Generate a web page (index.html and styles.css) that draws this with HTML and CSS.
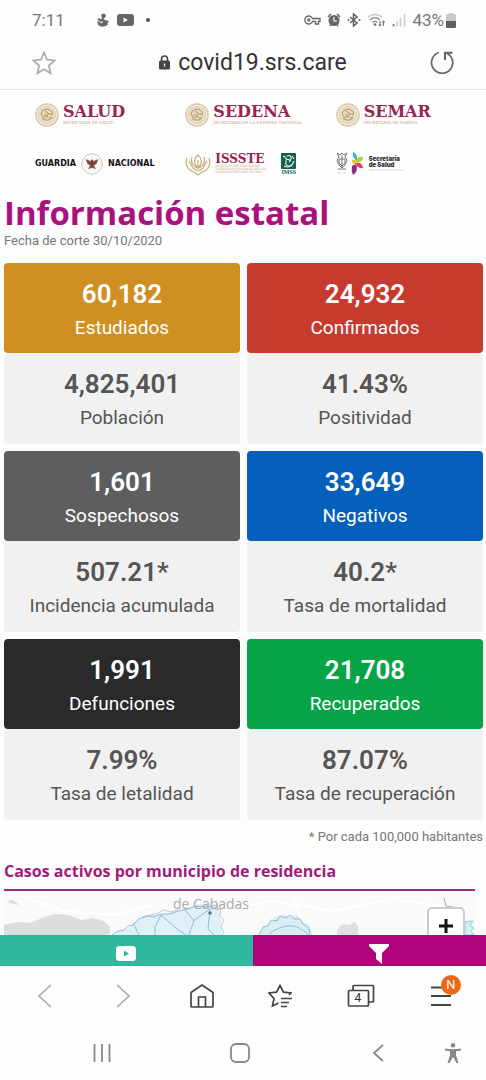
FILE: index.html
```html
<!DOCTYPE html>
<html lang="es">
<head>
  <meta charset="utf-8">
  <meta name="viewport" content="width=device-width, initial-scale=1">
  <title>Información estatal</title>
  <link rel="stylesheet" href="styles.css">
</head>
<body>
  <!-- Plantilla del escudo que comparten las secretarías -->
  <svg width="0" height="0" class="defs" aria-hidden="true">
    <symbol id="escudo" viewBox="0 0 24 24">
      <circle cx="12" cy="12" r="11" fill="#f6efe2" stroke="#cdb893" stroke-width="1.6" stroke-dasharray="1.4 .5"/>
      <circle cx="12" cy="12" r="8.6" fill="#eadfc9" stroke="#d8c6a4" stroke-width=".8"/>
      <path d="M6 11c1-4 5-6 9-4 2 1 3 3 2 5-2-2-4-1-5 1s-4 2-6-2zM7 15c3 3 8 3 10-1M10 8l4 3M9 11l4 3M14 14l2 2" fill="none" stroke="#bda275" stroke-width="1.2"/>
    </symbol>
  </svg>

  <header class="status-bar">
    <span class="clock">7:11</span>
    <svg class="notif" width="12" height="14" viewBox="0 0 12 14">
      <circle cx="6.500" cy="2.800" r="2.300" fill="#666"/>
      <path d="M6.500 4L5 7l3 1-2 2M1 6l4 2M1 8.500c1 2 3 3 5 2.500s4-1 5-3M1.500 11c3 2.500 7 2 9-.5" fill="none" stroke="#666" stroke-width="2"/>
    </svg>
    <svg class="video" width="17" height="12" viewBox="0 0 17 12">
      <rect width="17" height="12" rx="3" fill="#666"/>
      <path d="M6.500 3.500v5l4.500-2.500z" fill="#fff"/>
    </svg>
    <span class="dot"></span>
    <div class="indicators">
      <svg width="17" height="12" viewBox="0 0 17 12" fill="none" stroke="#666" stroke-width="1.300">
        <path d="M8.500 4.500H16v3h-1.500V10h-3V7.500h-3a4 4 0 1 1 0-3z"/>
        <circle cx="4.800" cy="6" r="1.100"/>
      </svg>
      <svg width="14" height="14" viewBox="0 0 14 14">
        <circle cx="7" cy="7.500" r="5.500" fill="#666"/>
        <path d="M1 4l3-3M13 4l-3-3M3 13l1-2M11 13l-1-2" stroke="#666" stroke-width="1.500"/>
        <path d="M7 4v4h3" fill="none" stroke="#fff" stroke-width="1.200"/>
      </svg>
      <svg width="14" height="14" viewBox="0 0 14 14">
        <path d="M3 4l7 6-3.500 3V1L10 4l-7 6" fill="none" stroke="#666" stroke-width="1.600"/>
        <circle cx="1.500" cy="7" r="1" fill="#666"/>
        <circle cx="12.500" cy="7" r="1" fill="#666"/>
      </svg>
      <svg width="19" height="14" viewBox="0 0 19 14" fill="none">
        <path d="M1 4.500c4-4 10-4 14 0" stroke="#ccc" stroke-width="1.400"/>
        <path d="M3 7c3-3 7-3 10 0M5.500 9.500c1.500-1.500 3.500-1.500 5 0" stroke="#888" stroke-width="1.400"/>
        <circle cx="8" cy="11.500" r="1.200" fill="#666"/>
        <path d="M13 8v5M11.700 11.500l1.300 1.500 1.300-1.500M16.500 13V8M15.200 9.500L16.500 8l1.300 1.500" stroke="#777" stroke-width="1.100"/>
      </svg>
      <svg width="14" height="14" viewBox="0 0 14 14">
        <path d="M1.500 11v2.500" stroke="#777" stroke-width="1.600"/>
        <path d="M5 8v5.500M8.500 5v8.500M12.500 1v12.500" stroke="#ccc" stroke-width="1.600"/>
      </svg>
      <span class="battery">43%</span>
      <svg width="10" height="15" viewBox="0 0 10 15">
        <path d="M3 0h4v1h1.500Q10 1 10 2.500V8H0V2.500Q0 1 1.500 1H3z" fill="#c8c8c8"/>
        <path d="M0 8h10v5.500Q10 15 8.500 15h-7Q0 15 0 13.500z" fill="#606060"/>
      </svg>
    </div>
  </header>

  <div class="address-bar">
    <button type="button" aria-label="Guardar en favoritos">
      <svg width="24" height="24" viewBox="0 0 24 24" fill="none" stroke="#aaa" stroke-width="1.700">
        <path d="M12 1.500l3 7.200 7.800.7-5.900 5.200 1.700 7.700-6.600-4-6.600 4 1.700-7.700L1.200 9.400 9 8.700z"/>
      </svg>
    </button>
    <a class="url" href="#">
      <svg width="11" height="15" viewBox="0 0 11 15">
        <path d="M2.500 7V4a3 3 0 0 1 6 0v3" fill="none" stroke="#444" stroke-width="1.600"/>
        <rect y="5.500" width="11" height="9" rx="1.500" fill="#444"/>
        <path d="M5.500 8.500v3" stroke="#fff" stroke-width="1.300"/>
      </svg>
      <span>covid19.srs.care</span>
    </a>
    <button type="button" aria-label="Recargar">
      <svg width="24" height="24" viewBox="0 0 24 24" fill="none" stroke="#666" stroke-width="1.700">
        <path d="M9 1.500A10.600 10.600 0 1 0 20 4.500l-3-2.500"/>
        <path d="M22.500 1.700H15V9" stroke-width="2"/>
      </svg>
    </button>
  </div>

  <main class="page">
    <section class="logos">
      <div class="logo">
        <svg width="24" height="24"><use href="#escudo"/></svg>
        <div class="logo-text"><b>SALUD</b><small>SECRETARÍA DE SALUD</small></div>
      </div>
      <div class="logo">
        <svg width="24" height="24"><use href="#escudo"/></svg>
        <div class="logo-text"><b>SEDENA</b><small>SECRETARÍA DE LA DEFENSA NACIONAL</small></div>
      </div>
      <div class="logo">
        <svg width="24" height="24"><use href="#escudo"/></svg>
        <div class="logo-text"><b>SEMAR</b><small>SECRETARÍA DE MARINA</small></div>
      </div>
      <div class="logo guardia">
        <span>GUARDIA</span>
        <svg width="22" height="22" viewBox="0 0 22 22">
          <circle cx="11" cy="11" r="10.300" fill="#f7f7f7" stroke="#ccc"/>
          <path d="M4.500 6l5 2L11 6l1.500 2 5-2-2 5-2.500 1.500 2 3.500-4-1-4 1 2-3.500L6.500 11z" fill="#8d5a48"/>
          <path d="M11 7v7M7 9l3 2M15 9l-3 2" stroke="#593028"/>
        </svg>
        <span>NACIONAL</span>
      </div>
      <div class="logo issste">
        <svg width="26" height="24" viewBox="0 0 26 24" fill="none" stroke="#c9ae7c" stroke-width="1.200">
          <path d="M2 6c-2 6 0 12 7 14l4 3 4-3c7-2 9-8 7-14M4 9l4 7 4 3M22 9l-4 7-4 3M13 3c-4 3-5 8 0 13 5-5 4-10 0-13zM7 5c-2 5 0 8 5 11M19 5c2 5 0 8-5 11M13 8v11"/>
        </svg>
        <div class="logo-text"><b>ISSSTE</b><small>INSTITUTO DE SEGURIDAD<br>Y SERVICIOS SOCIALES DE LOS<br>TRABAJADORES DEL ESTADO</small></div>
        <div class="imss">
          <svg width="15" height="16" viewBox="0 0 15 16">
            <rect width="15" height="16" rx="1" fill="#15604c"/>
            <path d="M2 3c2 2 4 0 3 5s2 6 6 4M6 3c5-2 5 4 2 6M3 13c4 2 8 1 10-5M5 6l4 1M11 3l2 3" fill="none" stroke="#e8f2ee" stroke-width="1.100"/>
          </svg>
          <span>IMSS</span>
        </div>
      </div>
      <div class="logo jalisco">
        <svg width="27" height="23" viewBox="0 0 27 23">
          <path d="M1 1l3 2 2-2 2 2 3-2-2 4 2 3-2 5-3 3-3-3-2-5 2-3zM3 7h6v4l-3 3-3-3zM2 17h8M6 3v12" fill="none" stroke="#777"/>
          <path d="M2 21h3M7 21h3" stroke="#ccc"/>
          <path d="M17 0q5 2 4 9-5-3-4-9z" fill="#2eb7c4"/>
          <path d="M16 8q5-1 5 4-5 1-5-4z" fill="#f6bd24"/>
          <path d="M20 10q1-6 7-5 0 6-7 5z" fill="#b7cf2e"/>
          <path d="M20 11q6-1 7 5-6 1-7-5z" fill="#e5356f"/>
          <path d="M16 14l4-2q3 7-3 11-2-4-1-9z" fill="#8e2b7a"/>
        </svg>
        <div class="jalisco-text"><span>Secretaría<br>de Salud</span><small>GOBIERNO DEL ESTADO DE JALISCO</small></div>
      </div>
    </section>

    <h1>Información estatal</h1>
    <p class="fecha">Fecha de corte 30/10/2020</p>

    <section class="cards">
      <div class="card">
        <div class="card-top estudiados"><strong>60,182</strong><span>Estudiados</span></div>
        <div class="card-bottom"><strong>4,825,401</strong><span>Población</span></div>
      </div>
      <div class="card">
        <div class="card-top confirmados"><strong>24,932</strong><span>Confirmados</span></div>
        <div class="card-bottom"><strong>41.43%</strong><span>Positividad</span></div>
      </div>
      <div class="card">
        <div class="card-top sospechosos"><strong>1,601</strong><span>Sospechosos</span></div>
        <div class="card-bottom"><strong>507.21*</strong><span>Incidencia acumulada</span></div>
      </div>
      <div class="card">
        <div class="card-top negativos"><strong>33,649</strong><span>Negativos</span></div>
        <div class="card-bottom"><strong>40.2*</strong><span>Tasa de mortalidad</span></div>
      </div>
      <div class="card">
        <div class="card-top defunciones"><strong>1,991</strong><span>Defunciones</span></div>
        <div class="card-bottom"><strong>7.99%</strong><span>Tasa de letalidad</span></div>
      </div>
      <div class="card">
        <div class="card-top recuperados"><strong>21,708</strong><span>Recuperados</span></div>
        <div class="card-bottom"><strong>87.07%</strong><span>Tasa de recuperación</span></div>
      </div>
    </section>
    <p class="nota">* Por cada 100,000 habitantes</p>

    <h2>Casos activos por municipio de residencia</h2>
    <div class="map">
      <svg viewBox="0 0 471 60" preserveAspectRatio="xMinYMin slice">
        <rect width="471" height="60" fill="#f9fafa"/>
        <path d="M2 4l7-1 6 5-6-1zM0 28l14-3 12 1 12-5 12-4 14 1 14 5 10-2 12 3 6 6 0 7-8 4-10 20H0z" fill="#dcdedd"/>
        <path d="M20 0l40 14 50 4 40-10M230 12l40-8 60 10 60-12 50 8M290 0l6 20 14 30" fill="none" stroke="#fff" stroke-width="2"/>
        <path d="M108 40l8-7 8-1 8-9 12-5 12-1 10-1 14-4 14-5 14-1 4 5 4 5 2 15-2 29H108z" fill="#e1f0f8"/>
        <path d="M108 38l6-4 6-1 4-4 5-1 6-6 9-3 6 1 7-3 9 0 8-3 10-2 8-3 10 1 11-2 1 5M129 26l6 12M157 18l-6 12 0 8M157 18l16 14 12 8M181 13l9 11-6 16M189 24l17-12M206 12l-2 20 8 8" fill="none" stroke="#8dbbdb"/>
        <path d="M138 20l8-2 6-1 8-4 6 2 8-2M206 10l8 3 3-1-1 7 4 4-3 7 3 5-4 7" fill="none" stroke="#c3cbcd"/>
        <circle cx="206" cy="16" r="1.800" fill="#537782"/>
        <path d="M255 38l4-8 8-5 3-5 9-2 6 1 8-1 6 7 6 3 4 11-20 20z" fill="#d9edf5"/>
        <path d="M255 38l4-8 5-1 3-6 6 1 3-5 6 2 4-3 4 4 6 0 3 5 6 4 1 7M265 37c9-7 20-10 28-7 5 2 9 5 12 9" fill="none" stroke="#8fbfd3"/>
        <path d="M333 34l3-5 5-2 5 1 4-3 4 4 0 30-20-5z" fill="#dde0df"/>
        <path d="M440 1l2 8 12 2" fill="none" stroke="#aaa"/>
        <path d="M461 25l8-1-3 4 4 3-3 3 3 4h-9z" fill="#d9edf5" stroke="#9cc6d8"/>
      </svg>
      <span class="place">de Cabadas</span>
      <button type="button" class="zoom-in" aria-label="Acercar">
        <svg width="14" height="14" viewBox="0 0 14 14"><path d="M7 0v14M0 7h14" stroke="#111" stroke-width="3"/></svg>
      </button>
    </div>
  </main>

  <div class="actions">
    <button type="button" class="action-video" aria-label="Video">
      <svg width="20" height="15" viewBox="0 0 20 15">
        <rect width="20" height="15" rx="3.500" fill="#fff"/>
        <path d="M8 4.500v6l5-3z" fill="#2fb89b"/>
      </svg>
    </button>
    <button type="button" class="action-filter" aria-label="Filtrar">
      <svg width="20" height="20" viewBox="0 0 20 20"><path d="M0 0h20v2l-7 7v11l-6-5V9L0 2z" fill="#fff"/></svg>
    </button>
  </div>

  <nav class="browser-nav">
    <button type="button" aria-label="Atrás">
      <svg width="24" height="24" viewBox="0 0 24 24" fill="none" stroke="#aaa" stroke-width="1.600"><path d="M18 1L6 12l12 11"/></svg>
    </button>
    <button type="button" aria-label="Adelante">
      <svg width="24" height="24" viewBox="0 0 24 24" fill="none" stroke="#aaa" stroke-width="1.600"><path d="M6 1l12 11L6 23"/></svg>
    </button>
    <button type="button" aria-label="Inicio">
      <svg width="24" height="24" viewBox="0 0 24 24" fill="none" stroke="#444" stroke-width="1.700">
        <path d="M1 8.500L12 1l11 7.500V22q0 1-1 1H2q-1 0-1-1zM8.500 23V13h7v10"/>
      </svg>
    </button>
    <button type="button" aria-label="Favoritos">
      <svg width="24" height="24" viewBox="0 0 24 24" fill="none" stroke="#444" stroke-width="1.700">
        <path d="M21 11l2-2-7.500-.8L12 1.500 8.500 8.200 1 9l5 5.500L4.500 22l6-3"/>
        <path d="M13 14.500h11M13 18.500h8M13 22.500h6"/>
      </svg>
    </button>
    <button type="button" class="tabs" aria-label="Pestañas">
      <svg width="28" height="24" viewBox="0 0 28 24" fill="none" stroke="#444" stroke-width="1.700">
        <path d="M6 6V2.500q0-1 1-1h18.500q1 0 1 1V17q0 1-1 1H22"/>
        <rect x="1.500" y="6.500" width="20" height="15.500" rx="1"/>
      </svg>
      <span>4</span>
    </button>
    <button type="button" class="menu" aria-label="Menú">
      <svg width="24" height="24" viewBox="0 0 24 24" stroke="#444" stroke-width="1.800"><path d="M2 3.500h20M2 12h20M2 21h20"/></svg>
      <span class="badge">N</span>
    </button>
  </nav>

  <nav class="system-nav">
    <button type="button" aria-label="Recientes">
      <svg width="20" height="20" viewBox="0 0 20 20" stroke="#888" stroke-width="1.800"><path d="M2.500 1v18M10 1v18M17.500 1v18"/></svg>
    </button>
    <button type="button" aria-label="Inicio del sistema">
      <svg width="20" height="20" viewBox="0 0 20 20" fill="none" stroke="#888" stroke-width="1.800"><rect x="1" y="1" width="18" height="18" rx="5"/></svg>
    </button>
    <button type="button" aria-label="Volver">
      <svg width="20" height="20" viewBox="0 0 20 20" fill="none" stroke="#888" stroke-width="1.800"><path d="M15 2l-9 8 9 8"/></svg>
    </button>
    <button type="button" class="access" aria-label="Accesibilidad">
      <svg width="18" height="20" viewBox="0 0 18 20">
        <circle cx="9" cy="2.200" r="2.200" fill="#888"/>
        <path d="M1 5.500q8 1.500 16 0v2l-5 .8v4L14.500 20h-2L9 14l-3.500 6h-2L6 12.300v-4L1 7.500z" fill="#888"/>
      </svg>
    </button>
  </nav>
</body>
</html>
```
FILE: styles.css
```css
* {
  box-sizing: border-box;
}

body {
  margin: 0;
  height: 100vh;
  display: flex;
  flex-direction: column;
  overflow: hidden;
  background-color: #fdfdfd;
  color: #555;
  font-family: Roboto, "Liberation Sans", Arial, sans-serif;
}

h1, h2, p {
  margin: 0;
}

svg {
  display: block;
  flex-shrink: 0;
}

button {
  padding: 0;
  border: none;
  background: none;
  font-family: inherit;
  cursor: pointer;
}

.defs {
  position: absolute;
}

/* Barra de estado */
.status-bar {
  display: flex;
  align-items: center;
  height: 40px;
  padding: 0 30px 0 32px;
  flex-shrink: 0;
  font-size: 17px;
  color: #777;
}

.notif {
  margin-left: 32px;
}

.video {
  margin-left: 8px;
}

.dot {
  width: 4px;
  height: 4px;
  margin-left: 12px;
  border-radius: 50%;
  background-color: #555;
}

.indicators {
  display: flex;
  align-items: center;
  gap: 6px;
  margin-left: auto;
}

.battery {
  margin-right: -4px;
}

/* Barra de direcciones */
.address-bar {
  display: flex;
  align-items: center;
  justify-content: space-between;
  height: 50px;
  padding: 0 32px 4px;
  flex-shrink: 0;
  border-bottom: 1px solid #e2e2e2;
}

.url {
  display: flex;
  align-items: center;
  gap: 8px;
  padding-left: 20px;
  color: #333;
  font-size: 23px;
  text-decoration: none;
}

/* Contenido */
.page {
  flex: 1;
  min-height: 0;
  overflow: hidden;
  padding: 0 3px 0 4px;
}

.logos {
  display: grid;
  grid-template-columns: repeat(3, 1fr);
  grid-template-rows: 49px 49px;
  column-gap: 3px;
  align-items: center;
  padding: 0 0 6px 31px;
}

.logo {
  display: flex;
  align-items: center;
  gap: 4px;
  white-space: nowrap;
}

.logo-text b {
  display: block;
  color: #982450;
  font: bold 16px/16px "DejaVu Serif", serif;
}

.logo-text small {
  display: block;
  color: #c4a484;
  font: 4px/5px "DejaVu Serif", serif;
}

.guardia {
  gap: 5px;
  color: #111;
  font: 900 8px/10px "DejaVu Sans", sans-serif;
}

.issste .logo-text b {
  font-size: 12px;
  line-height: 12px;
}

.issste .logo-text small {
  font-size: 3px;
  line-height: 3px;
}

.imss {
  margin-left: 11px;
  color: #15604c;
  font: bold 6px/6px "Liberation Serif", serif;
  text-align: center;
}

.jalisco-text {
  margin-left: 2px;
  color: #333;
  font: 900 6px/6px Inter, sans-serif;
}

.jalisco-text small {
  display: block;
  color: #ccc;
  font: 2px/4px Inter, sans-serif;
}

h1 {
  color: #a8127c;
  font: bold 33px/38px "Open Sans", sans-serif;
}

.fecha {
  margin-top: 1px;
  color: #777;
  font-size: 13px;
  line-height: 15px;
}

.cards {
  display: grid;
  grid-template-columns: 1fr 1fr;
  gap: 7px;
  margin-top: 15px;
}

.card-top,
.card-bottom {
  display: flex;
  flex-direction: column;
  align-items: center;
  padding-top: 14px;
  border-radius: 4px;
  font-size: 19px;
  line-height: 34px;
}

.card strong {
  font-size: 26px;
  font-weight: 600;
}

.card-top {
  height: 90px;
  color: #fff;
}

.card-bottom {
  height: 91px;
  background-color: #f1f1f1;
  color: #555;
}

.estudiados {
  background-color: #cf9021;
}

.confirmados {
  background-color: #c73b2f;
}

.sospechosos {
  background-color: #5e5e5e;
}

.negativos {
  background-color: #0560bb;
}

.defunciones {
  background-color: #2a2a2a;
}

.recuperados {
  background-color: #06a347;
}

.nota {
  margin-top: 9px;
  color: #777;
  font-size: 13px;
  line-height: 16px;
  text-align: right;
}

h2 {
  margin: 14px 8px 0 0;
  padding-bottom: 6px;
  border-bottom: 2px solid #96307a;
  color: #a01c78;
  font: bold 16px/24px "Open Sans", sans-serif;
}

/* Mapa */
.map {
  position: relative;
  height: 60px;
  margin: 6px 8px 0 0;
  overflow: hidden;
}

.map > svg {
  width: 100%;
  height: 100%;
}

.place {
  position: absolute;
  top: 0;
  left: 169px;
  color: #aaa;
  font: 14px/14px "Open Sans", sans-serif;
}

.zoom-in {
  position: absolute;
  top: 10px;
  right: 10px;
  display: flex;
  align-items: center;
  justify-content: center;
  width: 38px;
  height: 38px;
  border: 2px solid #ccc;
  border-radius: 5px;
  background-color: #fff;
}

/* Botones fijos de la página */
.actions {
  display: flex;
  height: 31px;
  flex-shrink: 0;
  overflow: hidden;
}

/* La barra es un poco más ancha que la ventana */
.actions button {
  display: flex;
  flex: 0 0 52%;
  align-items: center;
  justify-content: center;
  padding-top: 6px;
}

.action-video {
  background-color: #2fb89b;
}

.action-filter {
  background-color: #b0037c;
}

/* Navegador */
.browser-nav {
  display: flex;
  align-items: center;
  justify-content: space-between;
  height: 59px;
  padding: 0 33px;
  flex-shrink: 0;
}

.tabs,
.menu {
  position: relative;
}

.tabs span {
  position: absolute;
  top: 7px;
  left: 8px;
  color: #333;
  font-size: 12px;
  line-height: 15px;
}

.badge {
  position: absolute;
  top: -9px;
  right: -8px;
  width: 20px;
  height: 20px;
  border-radius: 50%;
  background-color: #ec6816;
  color: #fff;
  font-size: 13px;
  line-height: 20px;
  text-align: center;
}

/* Sistema */
.system-nav {
  position: relative;
  display: flex;
  align-items: center;
  justify-content: space-around;
  height: 55px;
  padding: 0 39px 0 33px;
  flex-shrink: 0;
}

.access {
  position: absolute;
  right: 24px;
}
```
